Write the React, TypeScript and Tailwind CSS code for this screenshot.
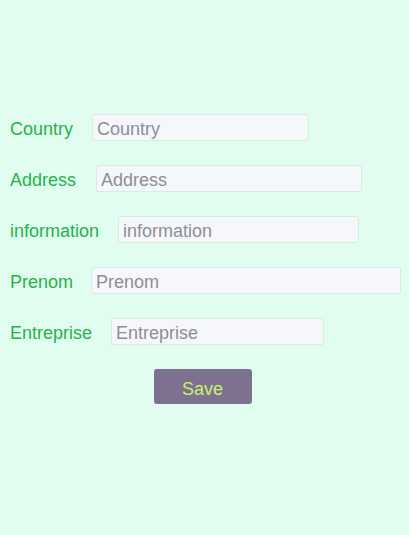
import React from "react";

const rows: { label: string; w: number; ml: number }[] = [
  { label: "Country", w: 217, ml: 19 },
  { label: "Address", w: 266, ml: 20 },
  { label: "information", w: 241, ml: 19 },
  { label: "Prenom", w: 310, ml: 18 },
  { label: "Entreprise", w: 213, ml: 19 },
];

export default function App() {
  return (
    <div
      className="min-h-[535px] w-full bg-[#e0fdf0] pt-[114px] pl-[10px]"
      style={{ fontFamily: '"Liberation Sans", Arial, sans-serif' }}
    >
      <div className="flex flex-col gap-[24px]">
        {rows.map((r) => (
          <div key={r.label} className="flex items-center h-[27px]">
            <span className="text-[18px] leading-[27px] text-[#27b24a] pt-[4px]">{r.label}</span>
            <input
              placeholder={r.label}
              style={{ width: r.w, marginLeft: r.ml }}
              className="h-[27px] rounded-[2px] border border-[#d5eee2] bg-[#f6f7fb] pl-[4px] pr-[4px] pt-[3px] text-[18px] text-[#555] placeholder:text-[#8e8e96] outline-none"
            />
          </div>
        ))}
      </div>
      <div className="flex justify-center mt-[24px] pr-[14px]">
        <button className="w-[98px] h-[35px] rounded-[3px] bg-[#7e7190] pt-[5px] text-[18px] leading-[20px] text-[#c9f26b]">
          Save
        </button>
      </div>
    </div>
  );
}
